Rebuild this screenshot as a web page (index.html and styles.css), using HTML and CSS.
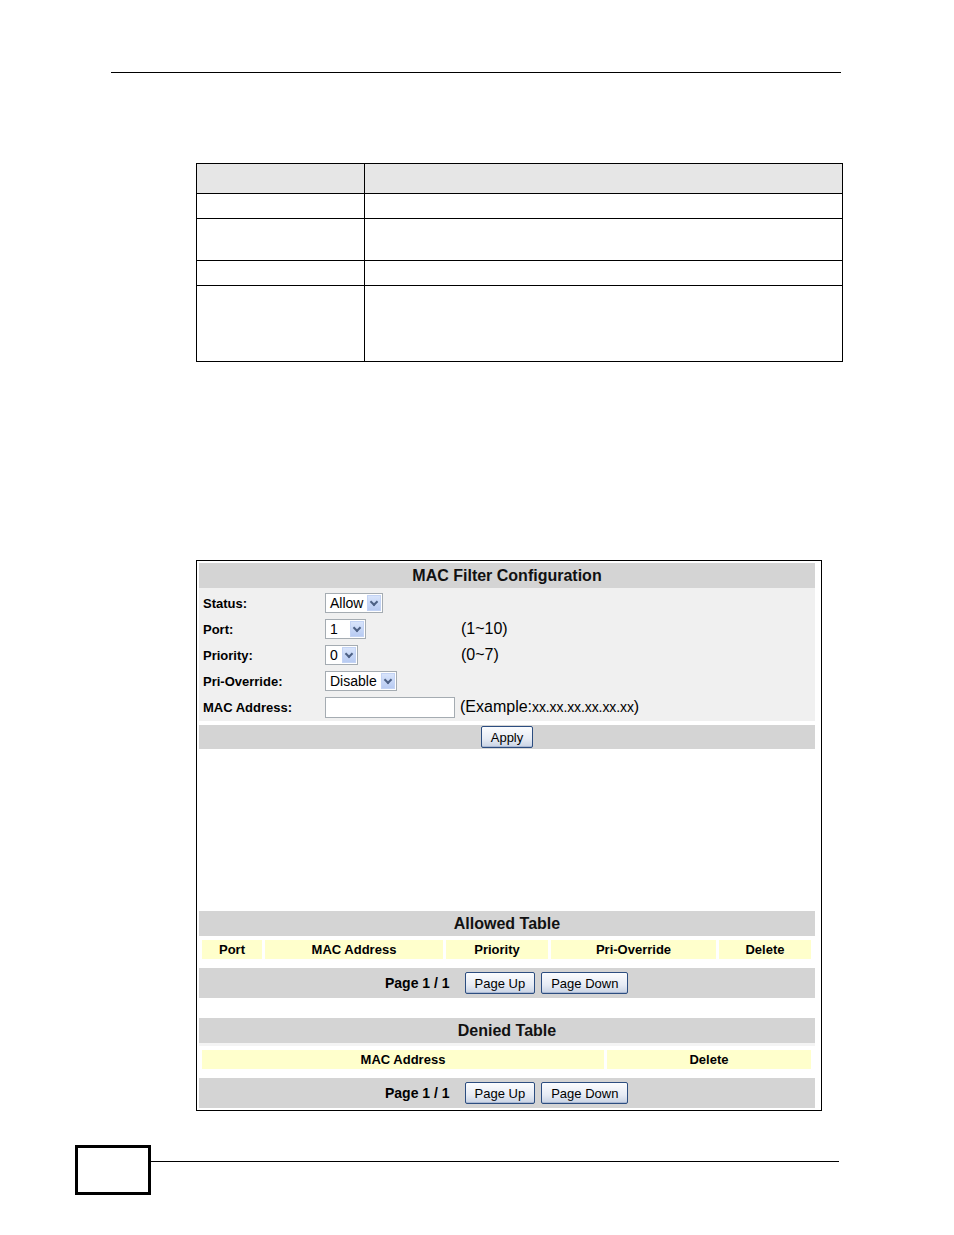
FILE: index.html
```html
<!DOCTYPE html>
<html lang="en">
<head>
    <meta charset="UTF-8">
    <title>MAC Filter Configuration</title>
    <link rel="stylesheet" href="styles.css">
</head>
<body>
    <div class="page">
        <div class="top-rule"></div>

        <!-- empty description table -->
        <table class="desc-table">
            <tr class="desc-head"><td class="c1"></td><td></td></tr>
            <tr class="r1"><td class="c1"></td><td></td></tr>
            <tr class="r2"><td class="c1"></td><td></td></tr>
            <tr class="r1"><td class="c1"></td><td></td></tr>
            <tr class="r3"><td class="c1"></td><td></td></tr>
        </table>

        <!-- screenshot of the web configurator -->
        <div class="shot">
            <div class="bar title">MAC Filter Configuration</div>
            <div class="form">
                <div class="form-row">
                    <span class="label">Status:</span>
                    <span class="select"><span class="val">Allow</span><span class="arrow"></span></span>
                </div>
                <div class="form-row">
                    <span class="label">Port:</span>
                    <span class="field"><span class="select"><span class="val w-port">1</span><span class="arrow"></span></span></span>
                    <span class="hint">(1~10)</span>
                </div>
                <div class="form-row">
                    <span class="label">Priority:</span>
                    <span class="field"><span class="select"><span class="val">0</span><span class="arrow"></span></span></span>
                    <span class="hint">(0~7)</span>
                </div>
                <div class="form-row">
                    <span class="label">Pri-Override:</span>
                    <span class="select"><span class="val">Disable</span><span class="arrow"></span></span>
                </div>
                <div class="form-row mac-row">
                    <span class="label">MAC Address:</span>
                    <span class="text-input"></span>
                    <span class="hint example">(Example:<span class="xx">xx.xx.xx.xx.xx.xx</span>)</span>
                </div>
            </div>
            <div class="bar apply-bar"><button class="btn">Apply</button></div>

            <div class="spacer"></div>

            <div class="bar title">Allowed Table</div>
            <div class="cols allowed">
                <span>Port</span>
                <span>MAC Address</span>
                <span>Priority</span>
                <span>Pri-Override</span>
                <span>Delete</span>
            </div>
            <div class="bar pager">
                <span class="page-no">Page 1 / 1</span>
                <button class="btn">Page Up</button>
                <button class="btn">Page Down</button>
            </div>

            <div class="bar title denied-title">Denied Table</div>
            <div class="cols denied">
                <span>MAC Address</span>
                <span>Delete</span>
            </div>
            <div class="bar pager">
                <span class="page-no">Page 1 / 1</span>
                <button class="btn">Page Up</button>
                <button class="btn">Page Down</button>
            </div>
        </div>

        <div class="footer">
            <div class="page-box"></div>
            <div class="footer-rule"></div>
        </div>
    </div>
</body>
</html>
```

FILE: styles.css
```css
body {
    margin: 0;
    background: #ffffff;
    font-family: "Liberation Sans", Arial, sans-serif;
    color: #000;
}
.page {
    width: 954px;
    padding-top: 72px;
}
.top-rule {
    margin-left: 111px;
    width: 730px;
    border-top: 1px solid #000;
}

/* description table */
.desc-table {
    margin: 90px 0 0 196px;
    width: 647px;
    border-collapse: collapse;
    border: 1.5px solid #000;
}
.desc-table td {
    border: 1.5px solid #000;
    padding: 0;
}
.desc-table .c1 {
    width: 167px;
}
.desc-head td {
    height: 29px;
    background: #e6e6e6;
}
.r1 td { height: 24px; }
.r2 td { height: 41px; }
.r3 td { height: 75px; }

/* screenshot frame */
.shot {
    margin: 198px 0 0 196px;
    width: 626px;
    box-sizing: border-box;
    border: 1px solid #000;
    padding: 2px 6px 2px 2px;
}
.bar {
    background: #d4d4d4;
    display: flex;
    align-items: center;
    justify-content: center;
}
.title {
    height: 25px;
    font-size: 16px;
    font-weight: bold;
    color: #111;
}
.form {
    background: #f0f0f0;
    padding: 2px 0 1px 4px;
}
.form-row {
    display: flex;
    align-items: center;
    height: 26px;
}
.label {
    width: 122px;
    font-size: 13px;
    font-weight: bold;
}
.field {
    width: 136px;
}
.hint {
    font-size: 16px;
}
.example .xx {
    font-size: 14px;
    letter-spacing: -0.1px;
}
.select {
    display: inline-flex;
    align-items: center;
    height: 18px;
    border: 1px solid #a5acb2;
    background: #fff;
    font-size: 14px;
}
.val {
    padding: 0 4px;
}
.w-port {
    padding-right: 12px;
}
.arrow {
    width: 14px;
    height: 16px;
    margin-right: 1px;
    background: linear-gradient(#d8e4fb, #b8cbf2);
    border: 1px solid #c3d3f4;
    box-sizing: border-box;
    position: relative;
}
.arrow::after {
    content: "";
    position: absolute;
    left: 3px;
    top: 3px;
    width: 4px;
    height: 4px;
    border-right: 2px solid #4d6185;
    border-bottom: 2px solid #4d6185;
    transform: rotate(45deg);
}
.text-input {
    width: 128px;
    height: 19px;
    border: 1px solid #a5acb2;
    background: #fff;
    margin-right: 5px;
}
.apply-bar {
    margin-top: 4px;
    height: 24px;
}
.btn {
    font-family: "Liberation Sans", Arial, sans-serif;
    font-size: 13px;
    color: #000;
    height: 22px;
    padding: 0 9px;
    border: 1px solid #2c4d80;
    border-radius: 2px;
    background: linear-gradient(#fbfcfe, #e6ebf4 60%, #c9d3e4);
    box-shadow: inset 0 -1px 0 #aab8d2;
}
.spacer {
    height: 162px;
}
.cols {
    display: flex;
    gap: 3px;
    padding: 4px 4px 0 3px;
    height: 19px;
}
.cols span {
    background: #ffffcc;
    font-size: 13px;
    font-weight: bold;
    display: flex;
    align-items: center;
    justify-content: center;
}
.allowed span:nth-child(1) { width: 60px; }
.allowed span:nth-child(2) { width: 178px; }
.allowed span:nth-child(3) { width: 102px; }
.allowed span:nth-child(4) { width: 165px; }
.allowed span:nth-child(5) { flex: 1; }
.denied span:nth-child(1) { width: 402px; }
.denied span:nth-child(2) { flex: 1; }
.pager {
    margin-top: 9px;
    height: 30px;
    justify-content: flex-start;
    padding-left: 186px;
    gap: 6px;
}
.page-no {
    font-size: 14px;
    font-weight: bold;
    margin-right: 9px;
}
.denied-title {
    margin-top: 20px;
    border-bottom: 3px solid #f4f4f4;
}
.denied {
    padding-top: 4px;
}

/* footer */
.footer {
    margin-top: 34px;
    display: flex;
    align-items: flex-start;
}
.page-box {
    margin-left: 75px;
    width: 76px;
    height: 50px;
    box-sizing: border-box;
    border: 3px solid #000;
}
.footer-rule {
    margin-top: 16px;
    width: 688px;
    border-top: 1px solid #000;
}
```
